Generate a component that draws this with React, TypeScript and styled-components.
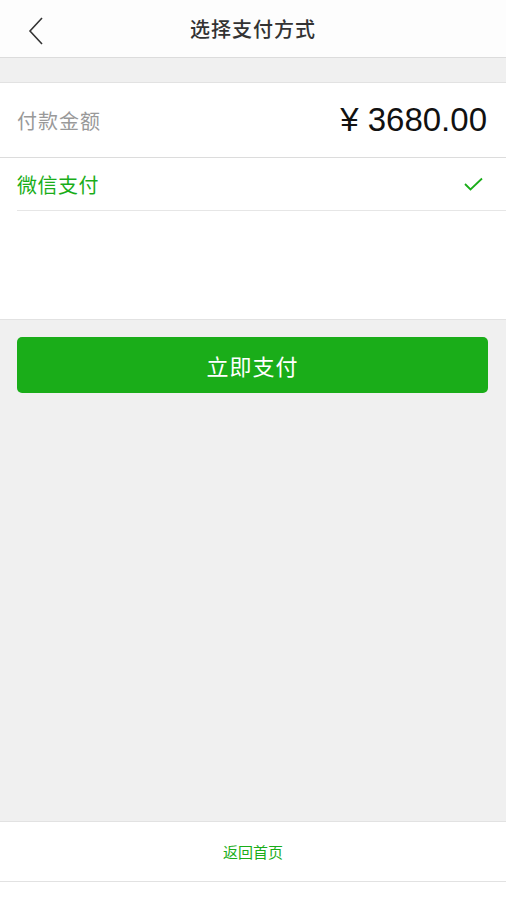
import React from "react";
import styled, { createGlobalStyle } from "styled-components";

const GlobalStyle = createGlobalStyle`
  html, body {
    margin: 0;
    padding: 0;
    background: #ffffff;
    font-family: "Noto Sans CJK SC", "Liberation Sans", sans-serif;
  }
`;

function BackIcon() {
  return (
    <svg width="16" height="28" viewBox="0 0 16 28">
      <path d="M14 1 L2 14 L14 27" fill="none" stroke="#333" strokeWidth="1.6" />
    </svg>
  );
}

function CheckIcon() {
  return (
    <svg width="19" height="14" viewBox="0 0 19 14">
      <path d="M1 7 L6.5 12.5 L18 1.5" fill="none" stroke="#1aad19" strokeWidth="1.8" />
    </svg>
  );
}

function App() {
  return (
    <>
      <GlobalStyle />
      <Page>
        <Header>
          <BackButton>
            <BackIcon />
          </BackButton>
          <Title>选择支付方式</Title>
        </Header>
        <Spacer />
        <Panel>
          <AmountRow>
            <Label>付款金额</Label>
            <Amount>¥ 3680.00</Amount>
          </AmountRow>
          <MethodRow>
            <MethodName>微信支付</MethodName>
            <CheckIcon />
          </MethodRow>
        </Panel>
        <Content>
          <PayButton>立即支付</PayButton>
        </Content>
        <Footer>
          <HomeLink>返回首页</HomeLink>
        </Footer>
      </Page>
    </>
  );
}

const Page = styled.div`
  display: flex;
  flex-direction: column;
  width: 506px;
  min-height: 900px;
  background: #ffffff;
`;

const Header = styled.div`
  position: relative;
  height: 57px;
  display: flex;
  align-items: center;
  justify-content: center;
  background: #fdfdfd;
  border-bottom: 1px solid #dcdcdc;
`;

const BackButton = styled.div`
  position: absolute;
  left: 28px;
  top: 17px;
  display: flex;
`;

const Title = styled.div`
  font-size: 20px;
  font-weight: 500;
  color: #333;
  letter-spacing: 1px;
`;

const Spacer = styled.div`
  height: 24px;
  background: #f0f0f0;
  border-bottom: 1px solid #e2e2e2;
`;

const Panel = styled.div`
  height: 236px;
  background: #fff;
  border-bottom: 1px solid #e2e2e2;
`;

const AmountRow = styled.div`
  height: 74px;
  display: flex;
  align-items: center;
  justify-content: space-between;
  padding: 0 19px 0 17px;
  border-bottom: 1px solid #dcdcdc;
`;

const Label = styled.div`
  font-size: 20px;
  letter-spacing: 1px;
  color: #999;
`;

const Amount = styled.div`
  font-family: "Liberation Sans", "Noto Sans CJK SC", sans-serif;
  font-size: 33px;
  color: #111;
  white-space: pre;
`;

const MethodRow = styled.div`
  height: 52px;
  margin-left: 17px;
  display: flex;
  align-items: center;
  justify-content: space-between;
  padding-right: 23px;
  border-bottom: 1px solid #e6e6e6;
`;

const MethodName = styled.div`
  font-size: 20px;
  letter-spacing: 0.5px;
  color: #1aad19;
`;

const Content = styled.div`
  height: 501px;
  background: #f0f0f0;
  padding: 17px 18px 0 17px;
  box-sizing: border-box;
`;

const PayButton = styled.button`
  width: 100%;
  height: 56px;
  border: none;
  border-radius: 5px;
  background: #1aad19;
  color: #fff;
  font-family: "Noto Sans CJK SC", sans-serif;
  font-size: 22px;
  letter-spacing: 1px;
`;

const Footer = styled.div`
  height: 59px;
  display: flex;
  align-items: center;
  justify-content: center;
  border-top: 1px solid #e2e2e2;
  border-bottom: 1px solid #e2e2e2;
`;

const HomeLink = styled.div`
  font-size: 15px;
  color: #1aad19;
`;

export default App;
